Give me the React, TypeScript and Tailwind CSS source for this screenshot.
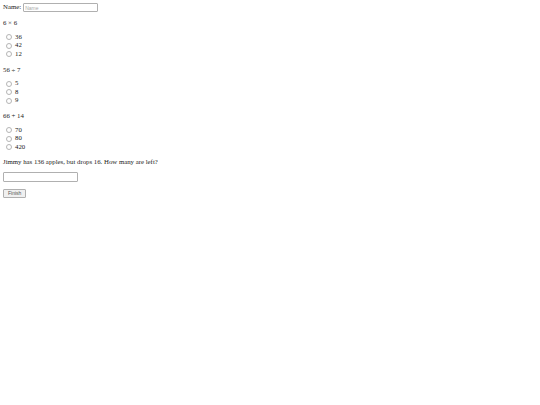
const QUESTIONS = [
  { q: '6 × 6', options: ['36', '42', '12'] },
  { q: '56 ÷ 7', options: ['5', '8', '9'] },
  { q: '66 + 14', options: ['70', '80', '420'] },
]

function Radio({ label, name }: { label: string; name: string }) {
  return (
    <label className="flex items-center h-[8.5px] leading-none">
      <span className="ml-[3px] mr-[3px] w-[6px] h-[6px] rounded-full border border-[#b5b5b5] bg-white box-border" />
      <input type="radio" name={name} className="hidden" />
      <span>{label}</span>
    </label>
  )
}

export default function App() {
  return (
    <div
      className="min-h-[405px] w-[540px] bg-white text-[#222] text-[6.8px] px-[3px] pt-[3px]"
      style={{ fontFamily: '"Liberation Serif", "Times New Roman", serif' }}
    >
      <div className="flex items-center h-[9px] gap-[2px]">
        <span>Name:</span>
        <input
          placeholder="Name"
          className="w-[75px] h-[9px] border border-[#b0b0b0] rounded-[1px] text-[5px] px-[1px] placeholder:text-[#aaa] outline-none"
          style={{ fontFamily: '"Liberation Sans", Arial, sans-serif' }}
        />
      </div>
      {QUESTIONS.map((item, i) => (
        <div key={i}>
          <p className="mt-[6px] mb-[6px] leading-[9px]">{item.q}</p>
          <div className="flex flex-col">
            {item.options.map((o) => (
              <Radio key={o} label={o} name={`q${i}`} />
            ))}
          </div>
        </div>
      ))}
      <p className="mt-[5px] mb-[6px] leading-[9px]">Jimmy has 136 apples, but drops 16. How many are left?</p>
      <input className="block w-[75px] h-[10px] border border-[#b0b0b0] rounded-[1px] outline-none" />
      <button
        className="block mt-[7px] h-[9px] px-[4px] text-[5px] leading-none text-[#555] border border-[#b0b0b0] rounded-[1px] bg-[#f0f0f0]"
        style={{ fontFamily: '"Liberation Sans", Arial, sans-serif' }}
      >
        Finish
      </button>
    </div>
  )
}
